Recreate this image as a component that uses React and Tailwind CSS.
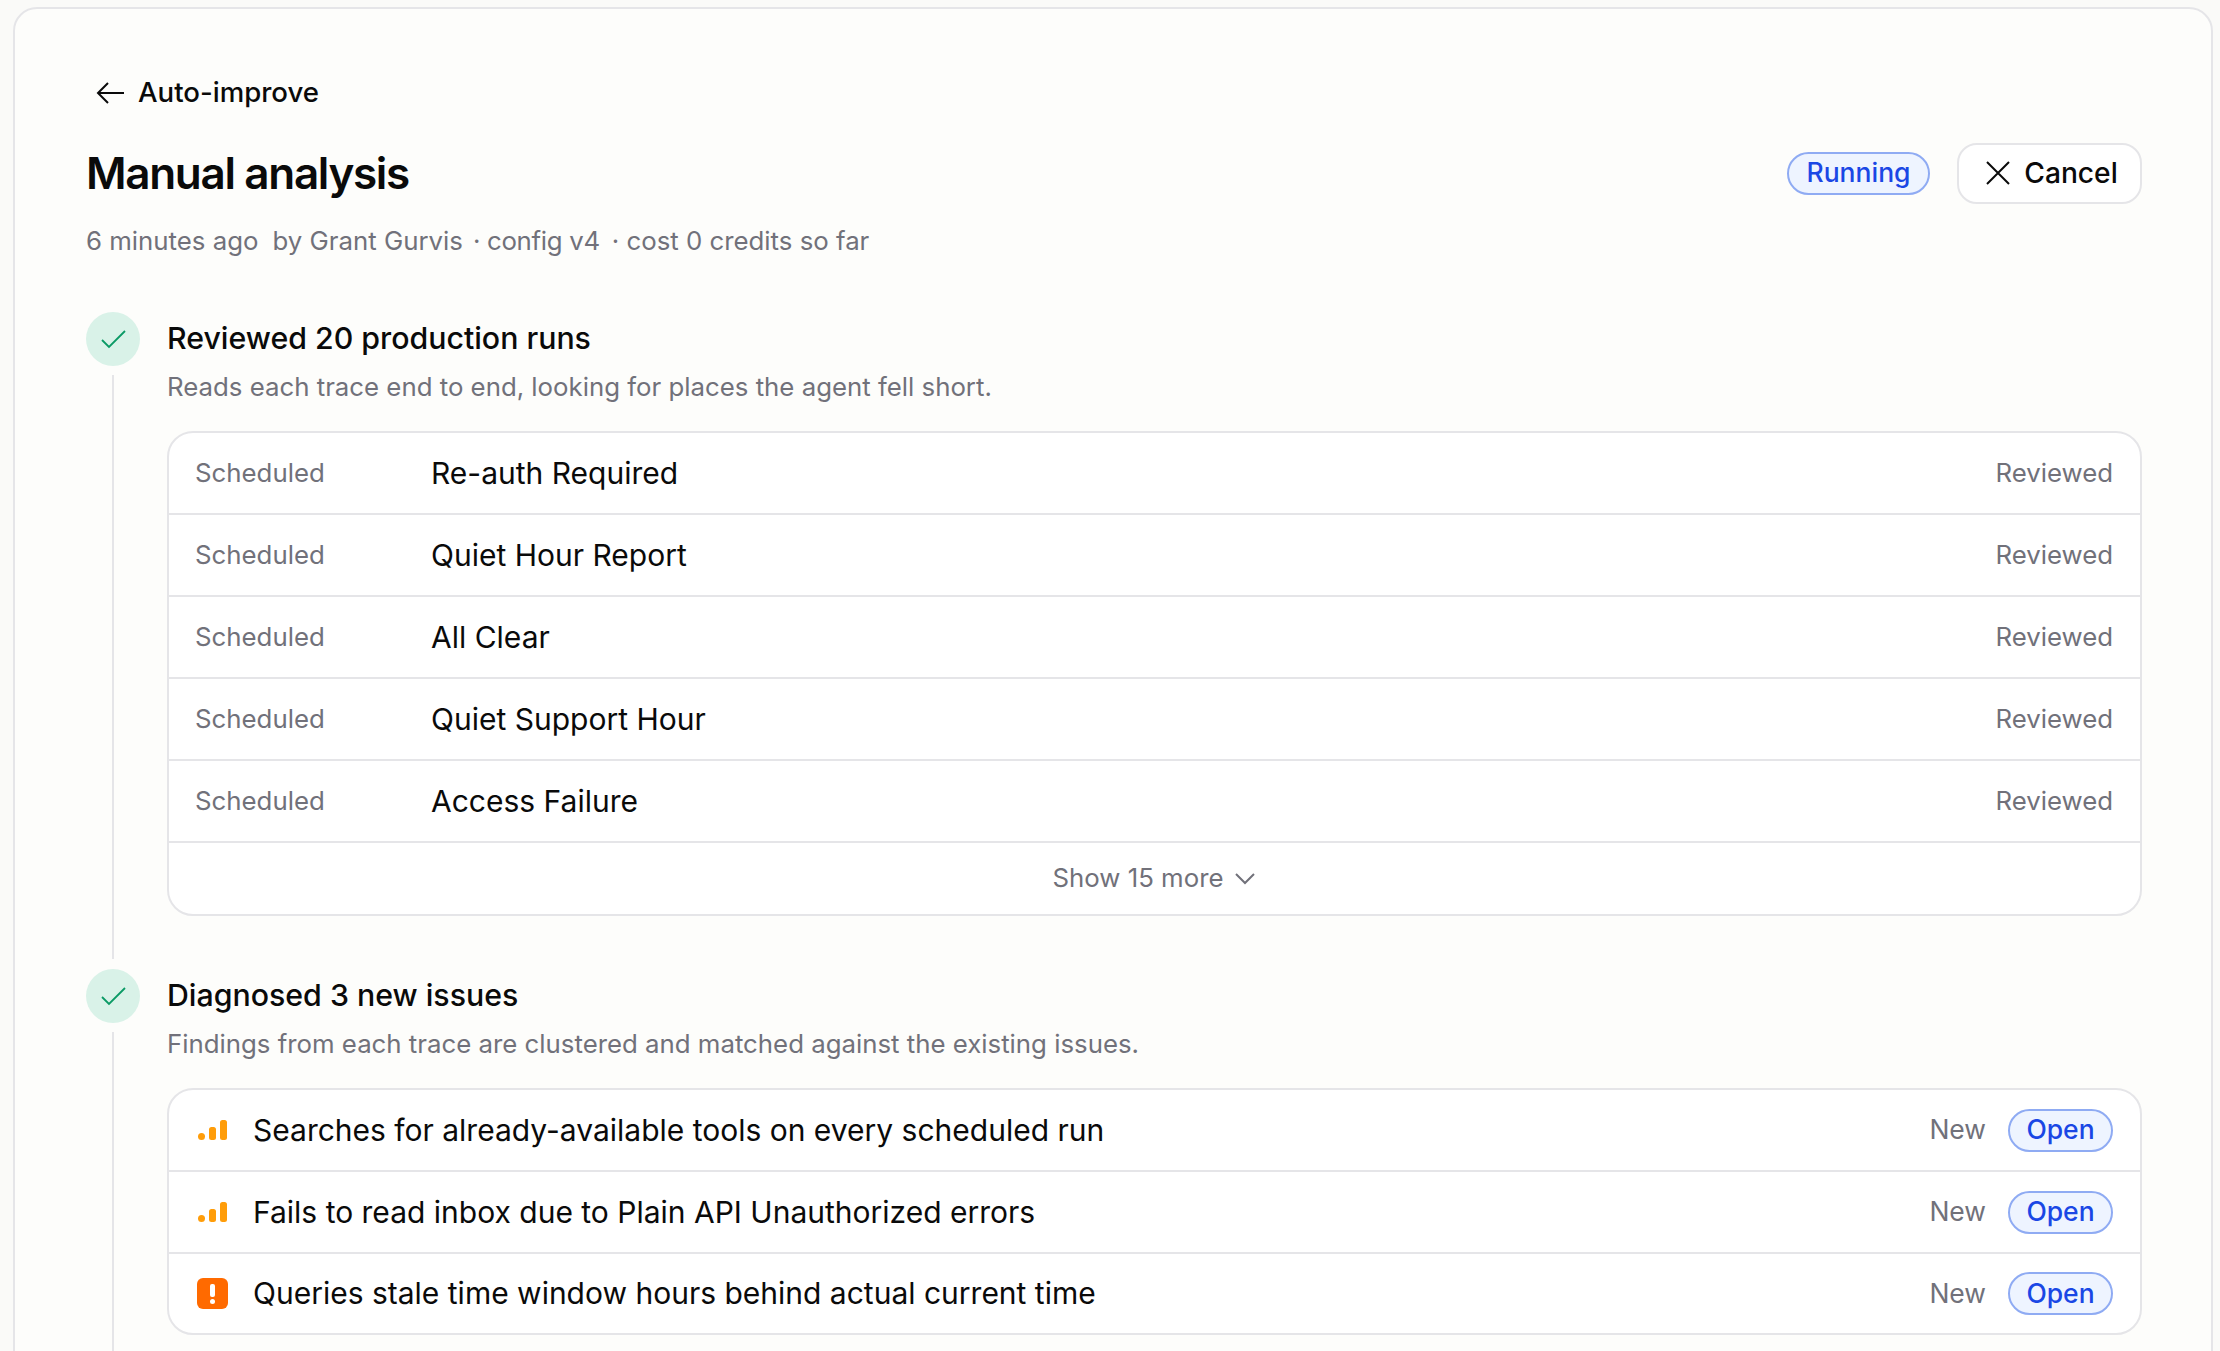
import React from "react";

const runs = ["Re-auth Required", "Quiet Hour Report", "All Clear", "Quiet Support Hour", "Access Failure"];

const issues = [
  { title: "Searches for already-available tools on every scheduled run", level: "bars" },
  { title: "Fails to read inbox due to Plain API Unauthorized errors", level: "bars" },
  { title: "Queries stale time window hours behind actual current time", level: "alert" },
];

const CheckIcon = () => (
  <svg width="26" height="19" viewBox="0 0 26 19" fill="none" stroke="#0b9a65" strokeWidth="1.8">
    <path d="M2 10 L9 17 L25 1" />
  </svg>
);

const BarsIcon = () => (
  <svg width="31" height="20" viewBox="0 0 31 20" fill="#ff9d0a">
    <rect x="1" y="13" width="7" height="7" rx="3.5" />
    <rect x="12" y="7" width="7" height="13" rx="2.5" />
    <rect x="23" y="0" width="7" height="20" rx="2.5" />
  </svg>
);

const AlertIcon = () => (
  <div className="relative h-[31px] w-[31px] rounded-[6px] bg-[#ff6a00]">
    <div className="absolute left-[13px] top-[6px] h-[13px] w-[5px] rounded-[2px] bg-white" />
    <div className="absolute left-[13px] top-[21px] h-[5px] w-[5px] rounded-full bg-white" />
  </div>
);

const Pill = ({ children, className }) => (
  <span className={"flex items-center justify-center rounded-full border-2 border-[#8fabf3] bg-[#eef4ff] font-medium text-[#1a47e5] " + className}>
    {children}
  </span>
);

const Step = ({ title, sub, last, children }) => (
  <div className={last ? "flex gap-[27px]" : "mb-[10px] flex gap-[27px]"}>
    <div className="flex w-[54px] shrink-0 flex-col items-center">
      <div className="flex h-[54px] w-[54px] items-center justify-center rounded-full bg-[#d9f2e8]">
        <CheckIcon />
      </div>
      <div className="mt-[9px] w-[2px] flex-1 bg-[#e5e5e8]" />
    </div>
    <div className="min-w-0 flex-1 pb-[43px]">
      <div className="h-[54px] text-[30.3px] font-medium leading-[52px] text-[#0a0a0a]">{title}</div>
      <div className="mb-[21px] h-[44px] text-[25.8px] leading-[42px] text-[#71717a]">{sub}</div>
      {children}
    </div>
  </div>
);

const App = () => {
  return (
    <div className="h-[1351px] overflow-hidden bg-[#fafaf8] pl-[13px] pr-[7px] pt-[7px] font-['Inter',sans-serif]">
      <div className="h-[1400px] rounded-t-[24px] border-2 border-[#e5e5e8] bg-[#fdfdfb] pl-[71px] pr-[69px]">
        {/* back link */}
        <div className="mt-[64px] flex h-[40px] items-center text-[#0a0a0a]">
          <svg className="ml-[10px]" width="28" height="24" viewBox="0 0 28 24" fill="none" stroke="#0a0a0a" strokeWidth="2">
            <path d="M28 12 H2 M12 2 L2 12 L12 22" />
          </svg>
          <span className="ml-[14px] text-[27.6px] font-medium">Auto-improve</span>
        </div>

        {/* header */}
        <div className="mt-[30px] flex h-[60px] items-center justify-between">
          <h1 className="text-[44px] font-semibold tracking-[-0.03em] text-[#0a0a0a]">Manual analysis</h1>
          <div className="flex items-center gap-[27px]">
            <Pill className="h-[43px] w-[143px] text-[26.5px]">Running</Pill>
            <button className="flex h-[61px] w-[185px] items-center justify-center gap-[14px] rounded-[20px] border-2 border-[#e5e5e8] bg-white pl-[5px] text-[28.2px] font-medium text-[#0a0a0a]">
              <svg width="24" height="24" viewBox="0 0 24 24" fill="none" stroke="#0a0a0a" strokeWidth="2">
                <path d="M1 1 L23 23 M23 1 L1 23" />
              </svg>
              Cancel
            </button>
          </div>
        </div>

        <div className="mt-[18px] flex h-[40px] items-center text-[25.8px] text-[#71717a]">
          <span>6 minutes ago</span>
          <span className="ml-[14px]">by Grant Gurvis</span>
          <span className="ml-[10px] tracking-[-0.3px]">· config v4</span>
          <span className="ml-[12px]">· cost 0 credits so far</span>
        </div>

        <div className="mt-[51px]">
          <Step title="Reviewed 20 production runs" sub="Reads each trace end to end, looking for places the agent fell short.">
            <div className="overflow-hidden rounded-[26px] border-2 border-[#e5e5e8] bg-white">
              {runs.map((name) => (
                <div key={name} className="flex h-[82px] items-center border-b-2 border-[#e5e5e8] pl-[26px] pr-[27px]">
                  <span className="w-[236px] shrink-0 text-[25.8px] text-[#71717a]">Scheduled</span>
                  <span className="flex-1 text-[30px] text-[#0a0a0a]">{name}</span>
                  <span className="text-[25.8px] text-[#71717a]">Reviewed</span>
                </div>
              ))}
              <div className="flex h-[71px] items-center justify-center gap-[11px] pr-[2px] text-[25.8px] text-[#71717a]">
                Show 15 more
                <svg width="20" height="12" viewBox="0 0 20 12" fill="none" stroke="#71717a" strokeWidth="2">
                  <path d="M1 1 L10 10 L19 1" />
                </svg>
              </div>
            </div>
          </Step>

          <Step last title="Diagnosed 3 new issues" sub="Findings from each trace are clustered and matched against the existing issues.">
            <div className="overflow-hidden rounded-[26px] border-2 border-[#e5e5e8] bg-white">
              {issues.map((issue, i) => (
                <div
                  key={issue.title}
                  className={i < issues.length - 1 ? "flex h-[82px] items-center border-b-2 border-[#e5e5e8] pl-[28px] pr-[27px]" : "flex h-[79px] items-center pl-[28px] pr-[27px]"}
                >
                  <div className="flex w-[56px] shrink-0 items-center">
                    {issue.level === "bars" ? <BarsIcon /> : <AlertIcon />}
                  </div>
                  <span className="flex-1 text-[30px] text-[#0a0a0a]">{issue.title}</span>
                  <span className="mr-[22px] text-[26.5px] text-[#71717a]">New</span>
                  <Pill className="h-[43px] w-[105px] text-[26.5px]">Open</Pill>
                </div>
              ))}
            </div>
          </Step>
        </div>
      </div>
    </div>
  );
};

export default App;
